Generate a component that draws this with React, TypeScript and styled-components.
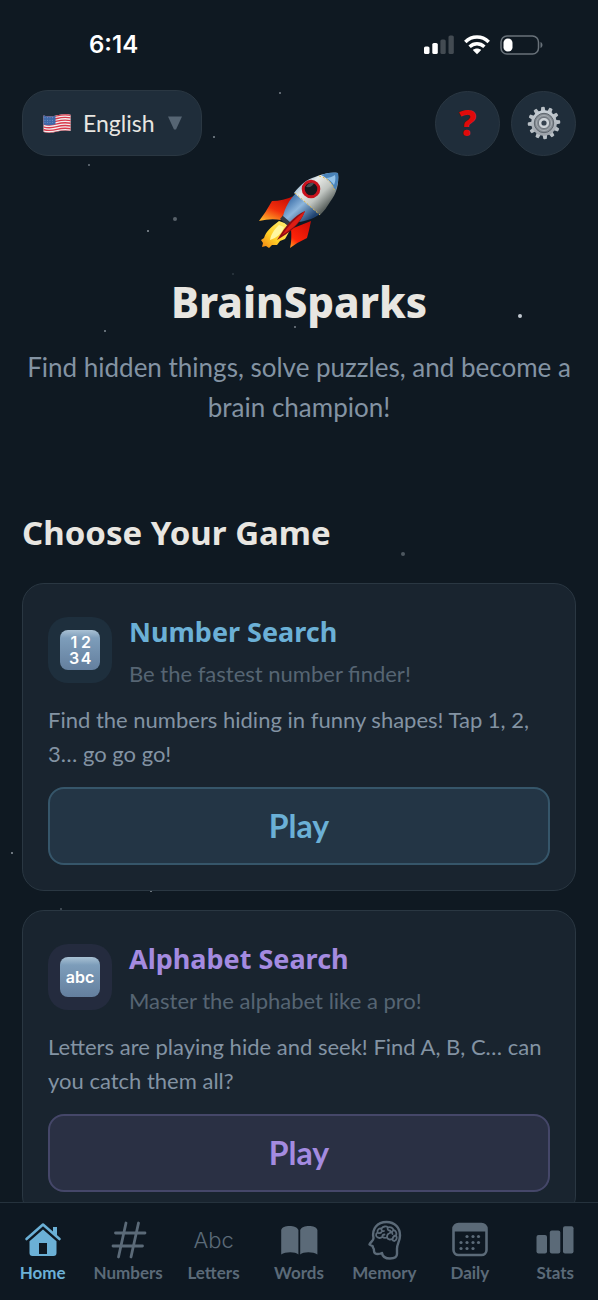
import React from "react";
import styled, { createGlobalStyle } from "styled-components";

const color = {
  page: "#0f1922",
  card: "#19242f",
  control: "#1f2d3a",
  line: "#2a3742",
  heading: "#e8e6e1",
  body: "#8393a3",
  muted: "#566573",
  blue: "#6bb0d6",
  violet: "#a48be0",
};

const sans = `Lato, "Noto Sans", sans-serif`;
const display = `"Noto Sans", "Open Sans", sans-serif`;

const GlobalStyle = createGlobalStyle`
  * { box-sizing: border-box; }
  body { margin: 0; background: ${color.page}; }
  h1, h2, h3, p { margin: 0; }
  button, select { font: inherit; color: inherit; }
`;

const Screen = styled.div`
  position: relative;
  display: flex;
  flex-direction: column;
  height: 100vh;
  background: ${color.page};
  color: ${color.body};
  font-family: ${sans};
`;

const Starfield = styled.svg`
  position: absolute;
  inset: 0;
  width: 100%;
  height: 100%;
  pointer-events: none;
`;

const StatusBar = styled.div`
  position: relative;
  flex: none;
  display: flex;
  align-items: center;
  justify-content: space-between;
  height: 90px;
  padding: 0 54px 0 89px;
  color: #fff;
`;

const Clock = styled.time`
  font: 600 24px/28px Inter, sans-serif;
`;

const StatusIcons = styled.div`
  display: flex;
  align-items: center;
  gap: 10px;
`;

const Content = styled.main`
  position: relative;
  flex: 1;
  min-height: 0;
  overflow-y: auto;
  scrollbar-width: none;
  padding: 0 22px 22px;
`;

const TopBar = styled.div`
  display: flex;
  align-items: center;
  gap: 11px;
`;

const LanguagePill = styled.label`
  display: flex;
  align-items: center;
  gap: 12px;
  height: 66px;
  margin-right: auto;
  padding: 0 18px 0 20px;
  border: 1px solid ${color.line};
  border-radius: 26px;
  background: ${color.control};
`;

const LanguageSelect = styled.select`
  appearance: none;
  padding: 0;
  border: 0;
  outline: 0;
  background: none;
  color: ${color.heading};
  font-size: 23px;
  line-height: 30px;
  cursor: pointer;
`;

const RoundButton = styled.button`
  display: flex;
  align-items: center;
  justify-content: center;
  width: 65px;
  height: 65px;
  padding: 0;
  border: 1px solid ${color.line};
  border-radius: 50%;
  background: ${color.control};
  cursor: pointer;
`;

const HelpMark = styled.span`
  color: #e00a0a;
  font-family: ${display};
  font-size: 36px;
  font-weight: 800;
  line-height: 40px;
`;

const Hero = styled.header`
  display: flex;
  flex-direction: column;
  align-items: center;
  padding-top: 15px;
  text-align: center;
`;

const AppTitle = styled.h1`
  margin-top: 21px;
  color: ${color.heading};
  font-family: ${display};
  font-size: 42px;
  font-weight: 800;
  line-height: 60px;
`;

const Intro = styled.p`
  margin-top: 15px;
  font-size: 26px;
  line-height: 40px;
`;

const SectionTitle = styled.h2`
  margin: 83px 0 27px;
  color: ${color.heading};
  font-family: ${display};
  font-size: 33px;
  font-weight: 700;
  line-height: 46px;
`;

const GameList = styled.div`
  display: flex;
  flex-direction: column;
  gap: 19px;
`;

const GameCard = styled.article`
  padding: 25px;
  border: 1px solid ${color.line};
  border-radius: 22px;
  background: ${color.card};
`;

const CardHead = styled.div`
  display: flex;
  align-items: center;
  gap: 17px;
`;

const IconTile = styled.div<{ $tint: string }>`
  flex: none;
  display: flex;
  align-items: center;
  justify-content: center;
  width: 64px;
  height: 66px;
  border-radius: 20px;
  background: ${(p) => p.$tint};
`;

const KeyCap = styled.div`
  display: flex;
  align-items: center;
  justify-content: center;
  width: 40px;
  height: 40px;
  border-radius: 8px;
  background: linear-gradient(#a9c1d4, #7d9dba 20%, #647f9e);
  color: #fff;
  font: 600 16px/16px Inter, sans-serif;
  text-align: center;
`;

const Digits = styled.div`
  display: grid;
  grid-template-columns: 12px 12px;
`;

const GameTitle = styled.h3<{ $accent: string }>`
  color: ${(p) => p.$accent};
  font-family: ${display};
  font-size: 27px;
  font-weight: 700;
  line-height: 46px;
`;

const Tagline = styled.p`
  margin-top: 2px;
  color: ${color.muted};
  font-size: 22px;
  line-height: 34px;
`;

const Description = styled.p`
  margin-top: 12px;
  font-size: 22px;
  line-height: 34px;
`;

const PlayButton = styled.button<{ $accent: string; $fill: string; $edge: string }>`
  display: block;
  width: 100%;
  height: 78px;
  margin-top: 16px;
  padding: 0 0 2px;
  border: 2px solid ${(p) => p.$edge};
  border-radius: 16px;
  background: ${(p) => p.$fill};
  color: ${(p) => p.$accent};
  font-size: 32px;
  font-weight: 700;
  cursor: pointer;
`;

const TabBar = styled.nav`
  position: relative;
  flex: none;
  display: grid;
  grid-template-columns: repeat(7, minmax(0, 1fr));
  padding: 17px 0;
  border-top: 1px solid #25323d;
  background: #0e1822;
`;

const Tab = styled.a<{ $active?: boolean }>`
  display: flex;
  flex-direction: column;
  align-items: center;
  gap: 3px;
  color: ${(p) => (p.$active ? color.blue : "#5b6a78")};
  font-size: 17px;
  font-weight: 700;
  line-height: 20px;
  text-decoration: none;
`;

const TabIcon = styled.svg`
  width: 40px;
  height: 40px;
  overflow: visible;
`;

const TabGlyph = styled.span`
  height: 40px;
  font: 300 22px/40px Inter, sans-serif;
`;

const stars: [number, number, number, number][] = [
  [280, 93, 1, 0.5], [214, 137, 1, 0.55], [89, 165, 1, 0.45], [175, 219, 2, 0.35],
  [148, 231, 1, 0.6], [233, 274, 1, 0.15], [105, 331, 1, 0.55], [295, 327, 1, 0.5],
  [520, 316, 2, 0.85], [403, 554, 2, 0.3], [12, 853, 1, 0.6], [151, 891, 1, 0.6], [61, 909, 1, 0.3],
];

function Stars() {
  return (
    <Starfield aria-hidden="true">
      {stars.map(([x, y, r, o]) => (
        <circle key={`${x}-${y}`} cx={`${(x / 598) * 100}%`} cy={y} r={r} fill="#dfe8ef" opacity={o} />
      ))}
    </Starfield>
  );
}

function Signal() {
  return (
    <svg width="30" height="20" viewBox="0 0 30 20" fill="#fff" aria-hidden="true">
      <rect x="0" y="11.5" width="5.5" height="7.5" rx="1.6" />
      <rect x="8.3" y="8" width="5.5" height="11" rx="1.6" />
      <rect x="16.4" y="4.5" width="5.3" height="14.5" rx="1.6" opacity=".22" />
      <rect x="24.5" y="0.5" width="5.3" height="18.5" rx="1.6" opacity=".22" />
    </svg>
  );
}

function Wifi() {
  return (
    <svg width="26" height="20" viewBox="0 0 26 20" fill="none" stroke="#fff" strokeWidth="3.5" aria-hidden="true">
      <path d="M1.3 7C8 .4 18 .4 24.700 7" />
      <path d="M5.600 11.700c4.400-4 10.400-4 14.800 0" />
      <path d="M8.800 15c2.400-2 6-2 8.400 0L13 19.300z" fill="#fff" stroke="none" />
    </svg>
  );
}

function Battery() {
  return (
    <svg width="44" height="20" viewBox="0 0 44 20" aria-hidden="true">
      <rect x="1" y="1" width="37.5" height="18" rx="6" fill="none" stroke="#69727a" strokeWidth="1.5" />
      <path d="M40.500 7v6c2.600-.7 2.600-5.300 0-6z" fill="#69727a" />
      <rect x="3.5" y="3.5" width="9" height="13" rx="4.300" fill="#fff" />
    </svg>
  );
}

function Flag() {
  return (
    <svg width="28" height="19" viewBox="0 0 28 19" aria-hidden="true">
      <defs>
        <clipPath id="flag-wave">
          <path d="M.5 1.500C5 3.200 9 2.800 14 1.300 19 0 23.500 0 27.600.7V17c-4-.8-8.500-.7-13.500.6C9 19 5 19.200.5 18z" />
        </clipPath>
      </defs>
      <g clipPath="url(#flag-wave)">
        <path d="M0 0h28v19H0z" fill="#f3eff0" />
        <g fill="none" stroke="#d8394a" strokeWidth="1.4">
          {[2, 4.7, 7.4, 10.1, 12.8, 15.5, 18.2].map((y) => (
            <path key={y} d={`M0 ${y}c5 1.500 9 1.200 14-.2s9.500-1.400 14-.6`} />
          ))}
        </g>
        <path d="M0 0h12.500v10.200C8.500 11.400 4 11.600 0 10.500z" fill="#3f68a8" />
        <g fill="#9fb9dc">
          {[3.8, 6.2, 8.6].map((y) =>
            [2, 4.5, 7, 9.5].map((x) => <circle key={`${x}-${y}`} cx={x} cy={y} r=".45" />)
          )}
        </g>
      </g>
    </svg>
  );
}

function Gear() {
  return (
    <svg width="34" height="34" viewBox="-17 -17 34 34" aria-hidden="true">
      <defs>
        <linearGradient id="gear-metal" x1="0" y1="0" x2="0" y2="1">
          <stop offset="0" stopColor="#c9d1d8" />
          <stop offset="1" stopColor="#9ba1a8" />
        </linearGradient>
      </defs>
      {Array.from({ length: 12 }, (_, i) => (
        <path key={i} d="M-2.300-11.500-1.700-16q1.700-.7 3.400 0l.6 4.500z" fill="#b9c0c6" transform={`rotate(${i * 30 - 4})`} />
      ))}
      <circle r="12.8" fill="url(#gear-metal)" />
      <circle r="9.7" fill="#858c93" stroke="#5d656d" strokeWidth="1" />
      <circle r="7.6" fill="none" stroke="#a4abb1" strokeWidth="1" />
      <circle r="5.6" fill="#cdd3d8" stroke="#636b73" strokeWidth=".8" />
      <circle r="2.6" fill="#35424f" />
    </svg>
  );
}

function Rocket() {
  return (
    <svg width="82" height="80" viewBox="0 0 82 80" aria-hidden="true">
      <defs>
        <linearGradient id="hull" x1="36" y1="14" x2="62" y2="42" gradientUnits="userSpaceOnUse">
          <stop offset="0" stopColor="#7fa8cb" />
          <stop offset=".3" stopColor="#e9ebe8" />
          <stop offset=".65" stopColor="#bfc4c0" />
          <stop offset="1" stopColor="#5b625f" />
        </linearGradient>
        <linearGradient id="hull-blue" x1="28" y1="30" x2="48" y2="52" gradientUnits="userSpaceOnUse">
          <stop offset="0" stopColor="#3b6ea8" />
          <stop offset=".45" stopColor="#8db6dc" />
          <stop offset="1" stopColor="#1f426f" />
        </linearGradient>
        <linearGradient id="fin" x1=".8" y1="0" x2=".2" y2="1">
          <stop offset="0" stopColor="#c40c06" />
          <stop offset=".55" stopColor="#f2300c" />
          <stop offset="1" stopColor="#ffb02a" />
        </linearGradient>
        <linearGradient id="fin-low" x1=".8" y1="0" x2=".2" y2="1">
          <stop offset="0" stopColor="#d10c06" />
          <stop offset=".75" stopColor="#ff2408" />
          <stop offset="1" stopColor="#ff8a1c" />
        </linearGradient>
        <linearGradient id="flame" x1="1" y1="0" x2="0" y2="1">
          <stop offset="0" stopColor="#fff27a" />
          <stop offset=".6" stopColor="#ffcf26" />
          <stop offset="1" stopColor="#f07e10" />
        </linearGradient>
      </defs>
      <path d="M36 25Q25 30 14 30 8 41 1 50q12-3 22-1z" fill="url(#fin)" />
      <path d="M53 50Q51 60 49 67 40 71 32 77q2-8 1-19z" fill="url(#fin-low)" />
      <path d="M21 50C13 56 8 60 6 67L3 69l2 3-1 4 4-1 3 2 3-3 5 0 3-4 5-2c3-5 5-8 5-14z" fill="url(#flame)" />
      <path d="M21 54c-5 5-8 9-9 15 7-2 12-7 14-13z" fill="#fff7a0" />
      <path d="M22 48l4-5 10 7-5 6z" fill="#303a44" />
      <path d="M38 22C31 29 27 37 25 45l7 6c10 1 22-2 30-8z" fill="url(#hull-blue)" />
      <path d="M80 2c1 11-1 20-8 29-3 5-6 9-10 13L36 22C42 14 49 8 57 6 64 3 72 1 80 2z" fill="url(#hull)" />
      <path d="M80 2c1 6 0 12-3 18-2-7-6-12-14-16 6-2 11-3 17-2z" fill="#4a83b8" />
      <path d="M77 4c-3 2-6 3-9 3 4 2 6 4 8 7 1-3 2-6 1-10z" fill="#93c2e8" />
      <path d="M61 5c9 2 14 8 16 16M37 22l25 22" fill="none" stroke="#d6b34e" strokeWidth="1" strokeDasharray="2 2" />
      <circle cx="53" cy="18" r="7.8" fill="#15191d" stroke="#c9121c" strokeWidth="3" />
      <path d="M48 16q3-5 8-4-2 5-8 4z" fill="#4a4f53" />
      <path d="M47 40C36 45 28 54 19 69 31 62 42 54 47 40z" fill="#8f0d12" />
      <path d="M47 40C38 47 30 55 24 64 34 58 43 51 47 40z" fill="#dd1d14" />
    </svg>
  );
}

const HomeIcon = () => (
  <TabIcon viewBox="0 0 40 40" aria-hidden="true" fill="currentColor">
    <path d="M3.500 19 20 4.500 36.500 19" fill="none" stroke="currentColor" strokeWidth="2.6" strokeLinecap="round" strokeLinejoin="round" />
    <path d="M30 7h4v9l-4-3.500z" />
    <path fillRule="evenodd" d="M20 9.500 33.500 21.300V33a3 3 0 0 1-3 3h-21a3 3 0 0 1-3-3V21.300zM16 23v11h8V23z" />
  </TabIcon>
);

const HashIcon = () => (
  <TabIcon viewBox="0 0 40 40" aria-hidden="true" fill="none" stroke="currentColor" strokeWidth="2.8" strokeLinecap="round">
    <path d="M7.500 13H37M5 26h29.500M18 3l-7.500 34M30.500 3 23 37" />
  </TabIcon>
);

const BookIcon = () => (
  <TabIcon viewBox="0 0 40 40" aria-hidden="true" fill="currentColor">
    <path d="M2.200 10c1-5.500 15.500-5.500 17.200 0v24.500c-3-3-13-3-17.200 0zM21.200 10c1.700-5.500 16.200-5.500 17.200 0v24.500c-4.200-3-14.200-3-17.200 0z" />
  </TabIcon>
);

const HeadIcon = () => (
  <TabIcon viewBox="0 0 40 40" aria-hidden="true" fill="none" stroke="currentColor" strokeLinecap="round" strokeLinejoin="round">
    <path
      strokeWidth="2.4"
      d="M9.500 18C7.500 8.500 13.500 2 22.500 2 31 2 36 8 36 15.500c0 5.500-3 8.500-3 13V34c0 3-3 4.500-7 4.500-4.500 0-7.500-1.500-8-5.500-2.500 1-5.500 1.200-7 .2-1.500-1-.8-2.700-1.200-4.200-.3-1-1.300-1.500-1-2.800L5.500 24.500C6.500 22 9.500 21 9.500 18z"
    />
    <path
      strokeWidth="1.8"
      d="M14 17.500c-2.500-.5-2.500-4-.5-5-.5-3 2-4.500 4-4 1.500-2.500 5-2.500 6.500-1 2.500-1 5 .5 5.500 2.500 2.500.5 3.500 3.500 2.500 5.500 1.500 2 .5 5-1.500 5.500-1 0-2-.5-2.500-2-2 1-4 .5-5-1.500-2 .7-3.500.3-4.500-.7-1.500 1.200-3.500 1.300-4.500.7zM17.500 8.500c-.5 2 1 3 2.500 2.500M14 13c2 .5 3 0 3.500-1M18.500 17c-.5-1.500.5-2.500 2-2.500M24 7.500c-1 1.500 0 3 1.500 3s1.500 2.500-.5 3-2 2.500-2 4M29.500 10.500c-1.500.5-2 2-1 3.500M32 15.500c-1.500 0-3 1-3.500 3.500"
    />
  </TabIcon>
);

const CalendarIcon = () => (
  <TabIcon viewBox="0 0 40 40" aria-hidden="true" fill="currentColor">
    <rect x="3.5" y="4" width="33" height="31" rx="5" fill="none" stroke="currentColor" strokeWidth="2.6" />
    <path d="M3 11.500V9q0-5 5-5h24q5 0 5 5v2.500z" />
    {[[17, 16.5], [23, 16.5], [28.5, 16.5], [11, 22.5], [17, 22.5], [23, 22.5], [28.5, 22.5], [11, 28.5], [17, 28.5], [23, 28.5]].map(
      ([x, y]) => <circle key={`${x}-${y}`} cx={x} cy={y} r="1.6" />
    )}
  </TabIcon>
);

const BarsIcon = () => (
  <TabIcon viewBox="0 0 40 40" aria-hidden="true" fill="currentColor">
    <rect x="1.5" y="15" width="10.5" height="18.5" rx="2" />
    <rect x="14.8" y="10.5" width="10.5" height="23" rx="2" />
    <rect x="28" y="6.3" width="10.5" height="27.2" rx="2" />
  </TabIcon>
);

const games = [
  {
    title: "Number Search",
    tagline: "Be the fastest number finder!",
    text: "Find the numbers hiding in funny shapes! Tap 1, 2, 3… go go go!",
    accent: color.blue,
    tint: "#1e2f3d",
    fill: "#233545",
    edge: "#36566a",
    icon: (
      <KeyCap>
        <Digits>
          <span>1</span>
          <span>2</span>
          <span>3</span>
          <span>4</span>
        </Digits>
      </KeyCap>
    ),
  },
  {
    title: "Alphabet Search",
    tagline: "Master the alphabet like a pro!",
    text: "Letters are playing hide and seek! Find A, B, C… can you catch them all?",
    accent: color.violet,
    tint: "#242b3e",
    fill: "#2a3044",
    edge: "#454769",
    icon: <KeyCap>abc</KeyCap>,
  },
];

const tabs = [
  { label: "Home", icon: <HomeIcon />, active: true },
  { label: "Numbers", icon: <HashIcon /> },
  { label: "Letters", icon: <TabGlyph aria-hidden="true">Abc</TabGlyph> },
  { label: "Words", icon: <BookIcon /> },
  { label: "Memory", icon: <HeadIcon /> },
  { label: "Daily", icon: <CalendarIcon /> },
  { label: "Stats", icon: <BarsIcon /> },
];

export default function App() {
  return (
    <Screen>
      <GlobalStyle />
      <Stars />
      <StatusBar>
        <Clock>6:14</Clock>
        <StatusIcons>
          <Signal />
          <Wifi />
          <Battery />
        </StatusIcons>
      </StatusBar>
      <Content>
        <TopBar>
          <LanguagePill>
            <Flag />
            <LanguageSelect aria-label="Language" defaultValue="en">
              <option value="en">English</option>
            </LanguageSelect>
            <svg width="16" height="16" viewBox="0 0 16 16" aria-hidden="true">
              <path d="M1 1.500h14L9 14.500H7z" fill="#566573" />
            </svg>
          </LanguagePill>
          <RoundButton type="button" aria-label="Help">
            <HelpMark>?</HelpMark>
          </RoundButton>
          <RoundButton type="button" aria-label="Settings">
            <Gear />
          </RoundButton>
        </TopBar>
        <Hero>
          <Rocket />
          <AppTitle>BrainSparks</AppTitle>
          <Intro>Find hidden things, solve puzzles, and become a brain champion!</Intro>
        </Hero>
        <SectionTitle>Choose Your Game</SectionTitle>
        <GameList>
          {games.map((g) => (
            <GameCard key={g.title}>
              <CardHead>
                <IconTile $tint={g.tint}>{g.icon}</IconTile>
                <div>
                  <GameTitle $accent={g.accent}>{g.title}</GameTitle>
                  <Tagline>{g.tagline}</Tagline>
                </div>
              </CardHead>
              <Description>{g.text}</Description>
              <PlayButton type="button" $accent={g.accent} $fill={g.fill} $edge={g.edge}>
                Play
              </PlayButton>
            </GameCard>
          ))}
        </GameList>
      </Content>
      <TabBar aria-label="Main">
        {tabs.map((t) => (
          <Tab key={t.label} href={`#${t.label.toLowerCase()}`} $active={t.active} aria-current={t.active ? "page" : undefined}>
            {t.icon}
            {t.label}
          </Tab>
        ))}
      </TabBar>
    </Screen>
  );
}
